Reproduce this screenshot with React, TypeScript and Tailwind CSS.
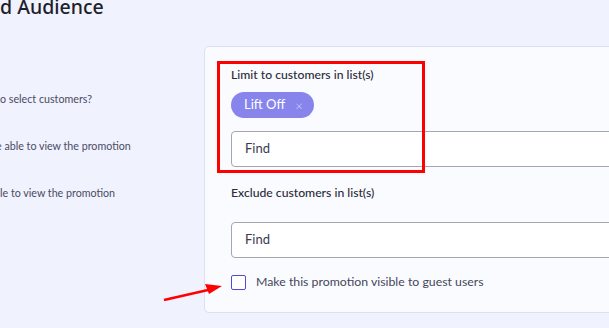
import React from 'react';

const ListField: React.FC<{ label: string; children?: React.ReactNode }> = ({ label, children }) => (
  <div>
    <div className="text-[12.2px] leading-[18px] font-medium text-[#2b2b3b]">{label}</div>
    {children}
  </div>
);

export default function App() {
  return (
    <div className="relative w-[609px] h-[328px] overflow-hidden bg-[#f0f2fe] font-['Lato',sans-serif] text-[#2b2b3b]">
      <div className="flex h-full">
        {/* left column */}
        <div className="w-[204px] shrink-0">
          <h1 className="-mt-[6px] font-['Noto_Sans',sans-serif] text-[19.5px] leading-[26px] font-medium text-[#1e1e2c]">d Audience</h1>
          <div className="mt-[70px] flex flex-col gap-[29px] text-[10.7px] leading-[18px] text-[#4a4b63] whitespace-nowrap">
            <div>o select customers?</div>
            <div className="-ml-[4px]">e able to view the promotion</div>
            <div>le to view the promotion</div>
          </div>
        </div>

        {/* card */}
        <div className="mt-[46px] h-[267px] flex-1 -mr-[20px] rounded-[5px] border border-[#dcdff6] bg-[#fafbfe] pl-[26px] pt-[19px]">
          <ListField label="Limit to customers in list(s)">
            <div className="mt-[8px] inline-flex h-[26px] items-center gap-[10px] rounded-full bg-[#8784ec] pl-[13px] pr-[11px] text-[13px] text-white">
              <span>Lift Off</span>
              <span className="text-[14px] font-light text-[#d8d7fb]">×</span>
            </div>
          </ListField>
          <div className="mt-[13px] flex h-[36px] items-center rounded-[4px] border border-[#a4a7b3] bg-white pl-[13px] text-[13px] text-[#3a3b52]">
            Find
          </div>

          <div className="mt-[17px]">
            <ListField label="Exclude customers in list(s)" />
          </div>
          <div className="mt-[20px] flex h-[36px] items-center rounded-[4px] border border-[#a4a7b3] bg-white pl-[13px] text-[13px] text-[#3a3b52]">
            Find
          </div>

          <label className="mt-[15px] flex items-center gap-[10px] text-[12.3px] text-[#45465c]">
            <span className="h-[15px] w-[15px] shrink-0 rounded-[2px] border border-[#4f4bd3] bg-white" />
            Make this promotion visible to guest users
          </label>
        </div>
      </div>

      {/* annotations */}
      <div className="absolute left-[217px] top-[61px] h-[112px] w-[208px] border-[3px] border-[#ff0000]" />
      <svg className="absolute left-0 top-0" width="609" height="328">
        <line x1="164" y1="300" x2="208" y2="290" stroke="#ff0000" strokeWidth="2.5" />
        <polygon points="222,286 205,284 209,294" fill="#ff0000" />
      </svg>
    </div>
  );
}
